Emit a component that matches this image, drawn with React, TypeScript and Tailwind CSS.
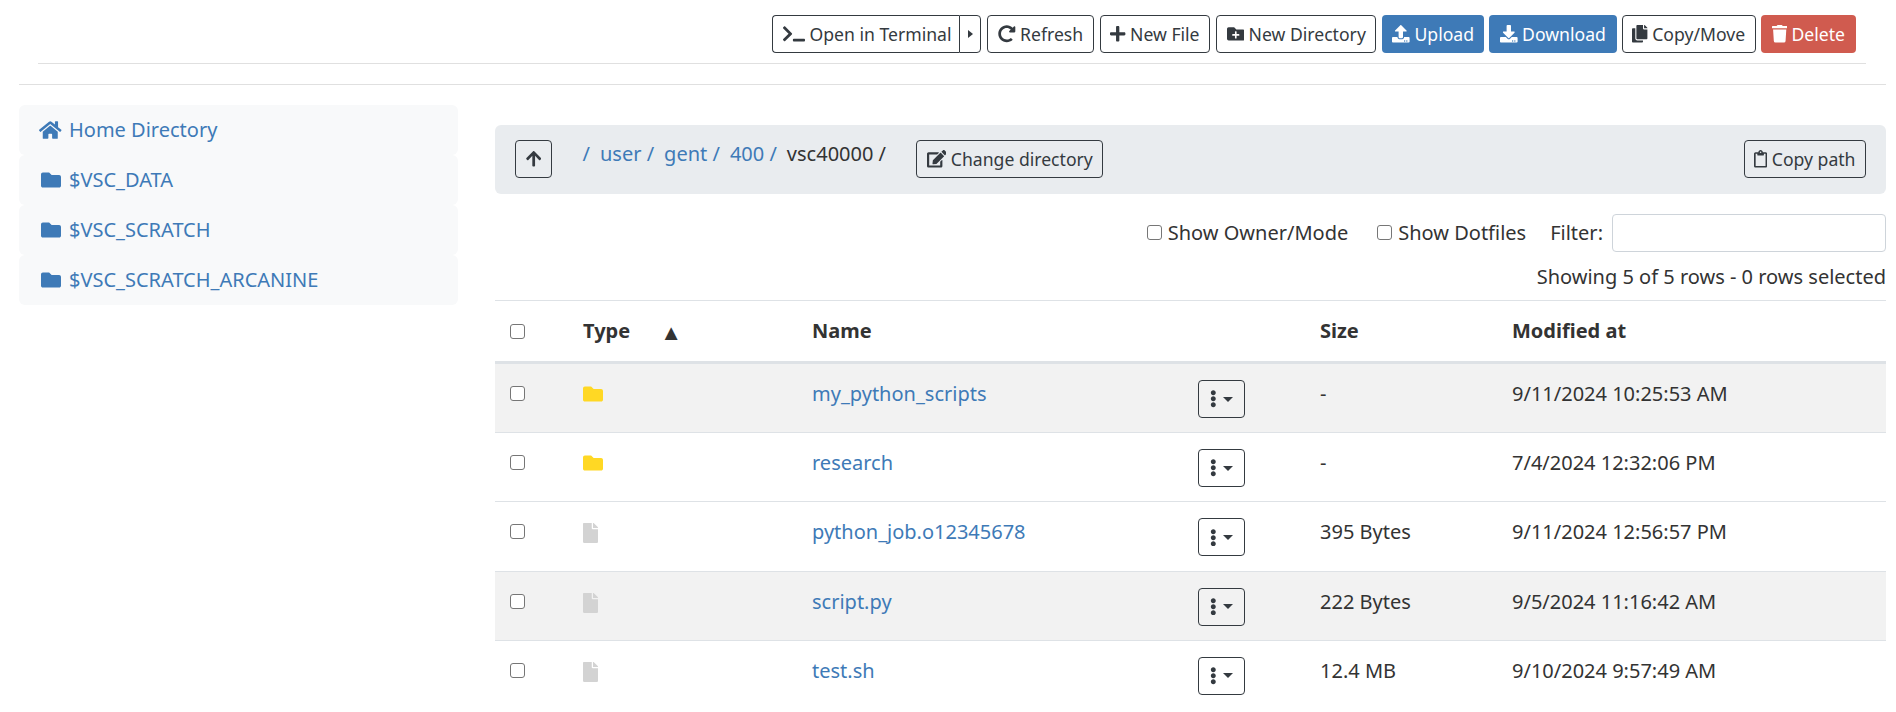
import React from "react";
import { FaHome, FaFolder, FaFile, FaEllipsisV, FaArrowUp, FaEdit, FaRegClipboard, FaRedoAlt, FaPlus, FaFolderPlus, FaUpload, FaDownload, FaCopy, FaTrash, FaTerminal } from "react-icons/fa";

const outline = "h-[38px] inline-flex items-center rounded-[4px] border border-[#343a40] text-[#343a40] bg-transparent px-[9.5px] text-[17.6px] whitespace-nowrap";

function Btn({ icon, label, className = "" }: { icon: React.ReactNode; label: string; className?: string }) {
  return (
    <button className={`${outline} gap-[4.5px] ${className}`}>
      {icon}
      <span>{label}</span>
    </button>
  );
}

function Solid({ icon, label, color, className = "" }: { icon: React.ReactNode; label: string; color: string; className?: string }) {
  return (
    <button className={`h-[38px] inline-flex items-center gap-[4.5px] rounded-[4px] text-[17.6px] text-white whitespace-nowrap ${color} ${className}`}>
      {icon}
      <span>{label}</span>
    </button>
  );
}

const rows = [
  { name: "my_python_scripts", dir: true, size: "-", date: "9/11/2024 10:25:53 AM" },
  { name: "research", dir: true, size: "-", date: "7/4/2024 12:32:06 PM" },
  { name: "python_job.o12345678", dir: false, size: "395 Bytes", date: "9/11/2024 12:56:57 PM" },
  { name: "script.py", dir: false, size: "222 Bytes", date: "9/5/2024 11:16:42 AM" },
  { name: "test.sh", dir: false, size: "12.4 MB", date: "9/10/2024 9:57:49 AM" },
];

const side = [
  { label: "Home Directory", home: true },
  { label: "$VSC_DATA" },
  { label: "$VSC_SCRATCH" },
  { label: "$VSC_SCRATCH_ARCANINE" },
];

const Check = ({ className = "" }: { className?: string }) => (
  <span className={`block w-[15px] h-[15px] rounded-[3px] border border-[#767676] bg-white ${className}`} />
);

export default function App() {
  return (
    <div className="w-[1896px] h-[712px] overflow-hidden bg-white text-[#333333] text-[20px] font-['Noto_Sans',sans-serif]">
      <div className="ml-[38px] mr-[30px] h-[64px] pt-[15px] border-b border-[#e0e0e0] flex justify-end gap-[6px] pr-[10px]">
        <div className="flex">
          <button className={`${outline} gap-[4.5px] rounded-r-none pl-[10px] pr-[8px] border-r-0`}>
            <FaTerminal className="w-[22px] h-[17.6px] shrink-0" />
            <span>Open in Terminal</span>
          </button>
          <button className={`${outline} w-[22px] rounded-l-none justify-center px-0`}>
            <span className="block w-0 h-0 border-l-[5px] border-y-[4.5px] border-l-[#343a40] border-y-transparent" />
          </button>
        </div>
        <Btn icon={<FaRedoAlt className="w-[17.6px] h-[17.6px] shrink-0" />} label="Refresh" />
        <Btn icon={<FaPlus className="w-[15.4px] h-[17.6px] shrink-0" />} label="New File" />
        <Btn icon={<FaFolderPlus className="w-[17.6px] h-[17.6px] shrink-0" />} label="New Directory" />
        <Solid className="px-[10px]" icon={<FaUpload className="w-[17.6px] h-[17.6px] shrink-0" />} label="Upload" color="bg-[#3e7ab7]" />
        <Solid className="-ml-[1px] px-[11px]" icon={<FaDownload className="w-[17.6px] h-[17.6px] shrink-0" />} label="Download" color="bg-[#3e7ab7]" />
        <Btn className="-ml-[1px]" icon={<FaCopy className="w-[15.4px] h-[17.6px] shrink-0" />} label="Copy/Move" />
        <Solid className="-ml-[1px] px-[11px]" icon={<FaTrash className="w-[15.4px] h-[17.6px] shrink-0" />} label="Delete" color="bg-[#d05b4f]" />
      </div>
      <div className="ml-[19px] mr-[10px] mt-[20px] border-t border-[#e0e0e0]" />
      <div className="flex mt-[20px]">
        <div className="ml-[19px] w-[439px] shrink-0 self-start">
          {side.map((s) => (
            <div key={s.label} className="h-[50px] flex items-center gap-[7px] px-[20px] rounded-[6px] bg-[#f8f9fa] text-[#3e7ab7]">
              <span className="w-[23px] flex justify-center">
                {s.home ? <FaHome className="w-[22.5px] h-[20px]" /> : <FaFolder className="w-[20px] h-[20px]" />}
              </span>
              <span>{s.label}</span>
            </div>
          ))}
        </div>
        <div className="ml-[37px] w-[1391px] mt-[20px]">
          <div className="h-[69px] rounded-[6px] bg-[#e9ecef] flex items-start justify-between pl-[20px] pr-[20px] pt-[15px]">
            <div className="flex items-start">
              <button className={`${outline} w-[37px] justify-center px-0`}><FaArrowUp className="w-[15.4px] h-[17.6px]" /></button>
              <div className="ml-[30.5px] -mt-[1px] h-[30px] leading-[30px] flex gap-[10px] whitespace-pre">
                <span className="text-[#3e7ab7]">/</span>
                <span className="text-[#3e7ab7]">user /</span>
                <span className="text-[#3e7ab7]">gent /</span>
                <span className="text-[#3e7ab7]">400 /</span>
                <span>vsc40000 /</span>
              </div>
              <Btn className="ml-[30px]" icon={<FaEdit className="w-[19.8px] h-[17.6px] shrink-0" />} label="Change directory" />
            </div>
            <Btn icon={<FaRegClipboard className="w-[13.2px] h-[17.6px] shrink-0" />} label="Copy path" />
          </div>
          <div className="h-[38px] mt-[20px] flex items-center justify-end">
            <label className="flex items-center gap-[6px]"><Check className="mb-[2px]" />Show Owner/Mode</label>
            <label className="flex items-center gap-[6px] ml-[29px]"><Check className="mb-[2px]" />Show Dotfiles</label>
            <span className="ml-[24px]">Filter:</span>
            <span className="ml-[9px] block w-[274px] h-[38px] rounded-[4px] border border-[#ced4da] bg-white" />
          </div>
          <div className="text-right mt-[10px] h-[30px] leading-[30px]">Showing 5 of 5 rows - 0 rows selected</div>
          <table className="w-full table-fixed mt-[8px] border-collapse">
            <colgroup>
              <col className="w-[80px]" />
              <col className="w-[229px]" />
              <col className="w-[386px]" />
              <col className="w-[122px]" />
              <col className="w-[192px]" />
              <col />
            </colgroup>
            <thead>
              <tr className="h-[62px] border-t border-b-[3px] border-t-[#dee2e6] border-b-[#dee2e6] font-bold">
                <th className="pl-[15px] text-left"><Check /></th>
                <th className="pl-[8px] text-left"><span className="inline-flex items-center">Type<span className="ml-[30px] text-[22px] leading-none">▲</span></span></th>
                <th className="pl-[8px] text-left">Name</th>
                <th />
                <th className="pl-[8px] text-left">Size</th>
                <th className="pl-[8px] text-left">Modified at</th>
              </tr>
            </thead>
            <tbody>
              {rows.map((r, i) => (
                <tr key={r.name} className={`${i === 0 ? "h-[70px]" : "h-[69.3px]"} ${i < 4 ? "border-b border-[#dee2e6]" : ""} ${i === 0 || i === 3 ? "bg-[#f2f2f2]" : "bg-white"}`}>
                  <td className="pl-[15px] align-top pt-[22px]"><Check /></td>
                  <td className="pl-[8px] align-top pt-[21px]">
                    {r.dir ? <FaFolder className="w-[20px] h-[20px] -mt-[1px] text-[#ffd824]" /> : <FaFile className="w-[15px] h-[20px] text-[#d3d3d3]" />}
                  </td>
                  <td className="pl-[8px] align-top pt-[15px] text-[#3e7ab7]">{r.name}</td>
                  <td className="pl-[8px] align-top pt-[16px]">
                    <button className={`${outline} w-[47px] justify-center gap-[6px] px-0`}>
                      <FaEllipsisV className="w-[6.6px] h-[17.6px]" />
                      <span className="block w-0 h-0 border-t-[5px] border-x-[5px] border-t-[#343a40] border-x-transparent" />
                    </button>
                  </td>
                  <td className="pl-[8px] align-top pt-[15px]">{r.size}</td>
                  <td className="pl-[8px] align-top pt-[15px]">{r.date}</td>
                </tr>
              ))}
            </tbody>
          </table>
        </div>
      </div>
    </div>
  );
}
